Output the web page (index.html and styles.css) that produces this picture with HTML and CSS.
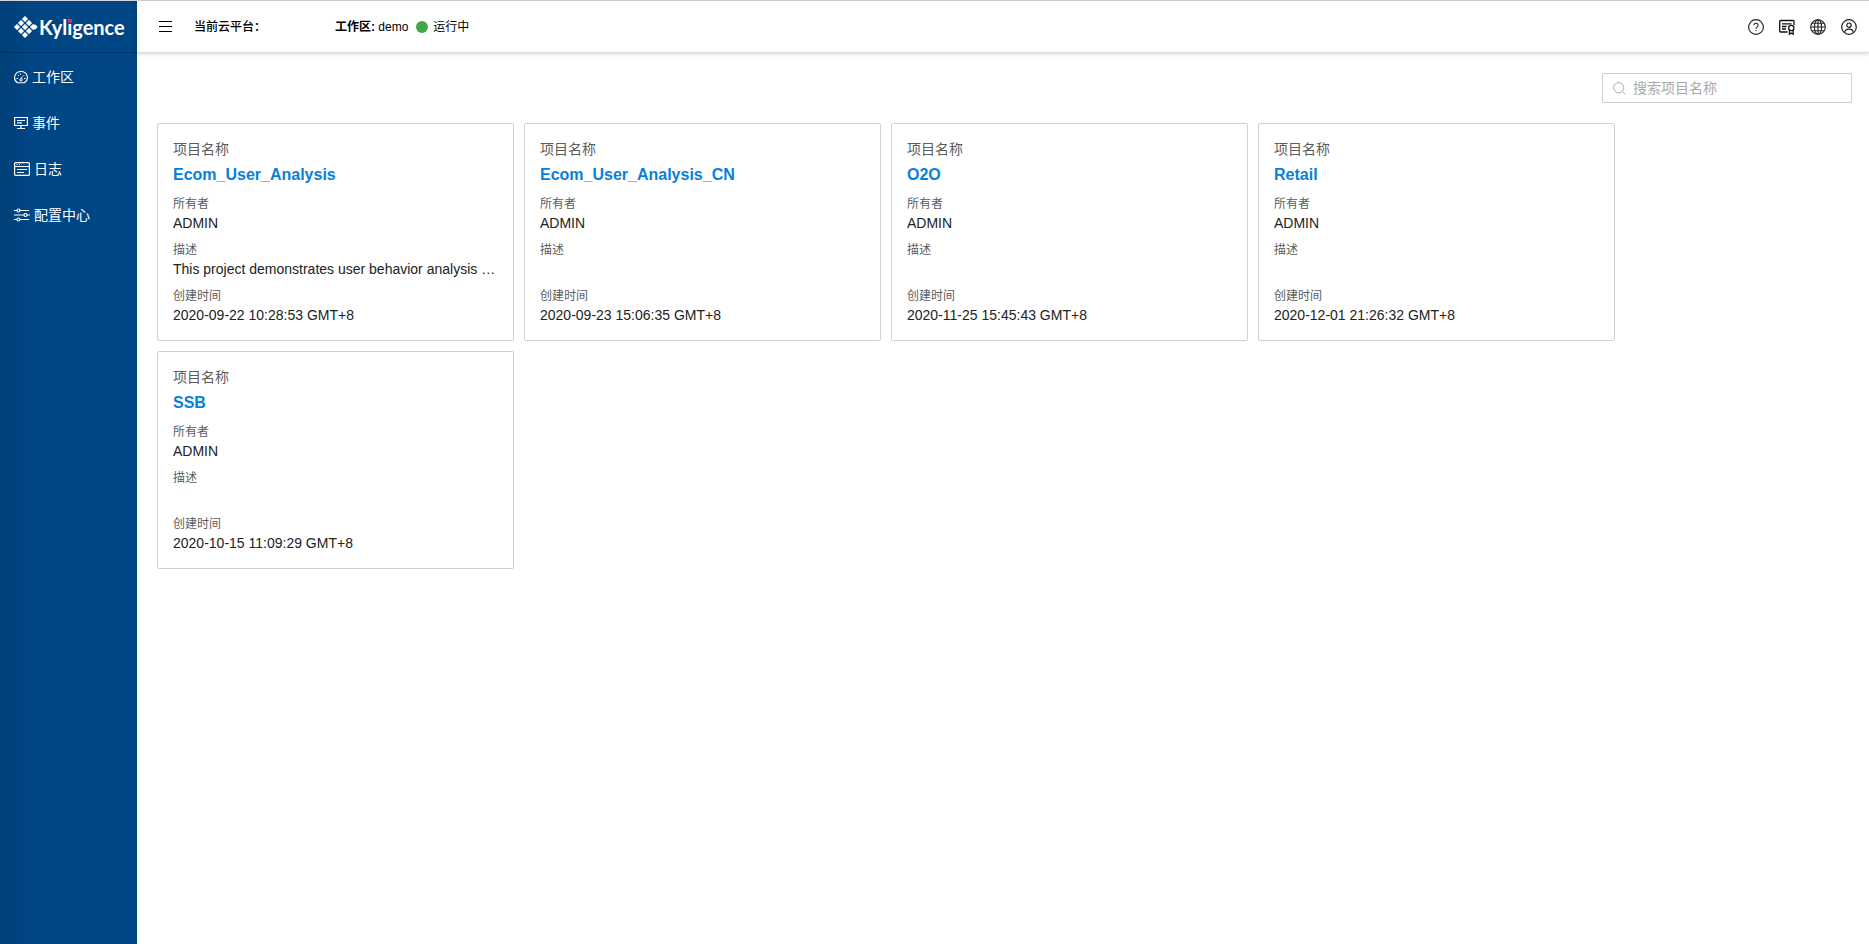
FILE: index.html
```html
<!DOCTYPE html>
<html lang="zh-CN">
<head>
<meta charset="utf-8">
<title>Kyligence</title>
<link rel="stylesheet" href="styles.css">
</head>
<body>
<div class="app">
  <aside class="sidebar">
    <a class="logo" href="#">
      <svg class="logo-mark" width="24" height="22" viewBox="0 0 24 22" fill="#fff" stroke="#fff" stroke-width="1.700" stroke-linejoin="round" aria-hidden="true">
        <path d="M11 1l2 2-2 2-2-2zM7 5l2 2-2 2-2-2zM15 5l2 2-2 2-2-2zM3 9l2 2-2 2-2-2zM11 9l2 2-2 2-2-2zM19 9Q21.500 9 22.500 11 21.500 13 19 13L17 11zM7 13l2 2-2 2-2-2zM15 13l2 2-2 2-2-2zM11 17l2 2-2 2-2-2z"/>
      </svg>
      <span class="logo-text">Kyl<span class="logo-i">i</span>gence</span>
    </a>
    <nav class="menu">
      <a class="menu-item" href="#">
        <svg width="14" height="14" viewBox="0 0 14 14" fill="none" stroke="#fff" aria-hidden="true"><path d="M3.500 12.800C-1.500 9.500.3 1.500 7 1.500s8.500 8 3.500 11.300Z" stroke-width="1.100" stroke-linejoin="round"/><circle cx="7" cy="9.800" r="1.200"/><path d="M7.500 8.600l.8-2M2.500 8.500h1.500M10 8.500h1.500M3.800 5l1 .9M10.300 5l-.8.800M6.500 3.500v1.300"/></svg>
        <span>工作区</span>
      </a>
      <a class="menu-item" href="#">
        <svg width="14" height="14" viewBox="0 0 14 14" fill="none" stroke="#fff" stroke-width="1.200" aria-hidden="true"><path d="M.6 1.500h12.800v8H.6zM3 4.500h8M3 6.800h5M7 9.500v3M3 12.500h8"/></svg>
        <span>事件</span>
      </a>
      <a class="menu-item" href="#">
        <svg width="16" height="14" viewBox="0 0 16 14" fill="none" stroke="#fff" stroke-width="1.200" aria-hidden="true"><rect x=".6" y=".6" width="14.800" height="12.800" rx="1"/><path d="M.5 4.500h15M3 7.500h10M3 10.500h7M2.500 2.500h1M5 2.500h1"/></svg>
        <span>日志</span>
      </a>
      <a class="menu-item" href="#">
        <svg width="16" height="14" viewBox="0 0 16 14" fill="none" stroke="#fff" stroke-width="1.200" aria-hidden="true"><path d="M0 2.500h3M6 2.500h9M0 7h10M13 7h3M0 11.500h3M6 11.500h9"/><circle cx="4.500" cy="2.500" r="1.500"/><circle cx="11.500" cy="7" r="1.500"/><circle cx="4.500" cy="11.500" r="1.500"/></svg>
        <span>配置中心</span>
      </a>
    </nav>
  </aside>
  <div class="page">
    <header class="topbar">
      <button class="icon-button toggle" type="button" aria-label="菜单"><svg width="13" height="11" viewBox="0 0 13 11" stroke="#000"><path d="M0 .5h13M0 5.500h13M0 10.500h13"/></svg></button>
      <span class="platform">当前云平台：</span>
      <span class="workspace"><b>工作区:</b> demo</span>
      <span class="dot"></span>
      <span>运行中</span>
      <div class="tools">
        <button class="icon-button" type="button" aria-label="帮助"><svg width="16" height="16" viewBox="0 0 16 16" fill="none" stroke="#222" stroke-width="1.100"><circle cx="8" cy="8" r="7.400"/><path d="M5.900 6.300a2.100 2.100 0 1 1 3.200 1.800Q8 8.800 8 9.900M8 11.200v1.100"/></svg></button>
        <button class="icon-button" type="button" aria-label="许可证"><svg width="16" height="16" viewBox="0 0 16 16" fill="none" stroke="#111" stroke-width="1.300"><path d="M8.500 13H1.500Q.7 13 .7 12.200V2.500Q.7 1.500 1.700 1.500H14q1 0 1 1v3.500M3 4.800h9.500M3 7.500h4.500M3 10h4"/><circle cx="12.300" cy="9" r="2.600"/><path d="M10.400 11v4.300l1.900-1.300 1.900 1.300V11"/></svg></button>
        <button class="icon-button" type="button" aria-label="语言"><svg width="16" height="16" viewBox="0 0 16 16" fill="none" stroke="#222" stroke-width="1.100"><circle cx="8" cy="8" r="7.300"/><ellipse cx="8" cy="8" rx="3.600" ry="7.300"/><path d="M8 .6v14.800M.6 8h14.800M1.700 4.300h12.600M1.700 11.700h12.600"/></svg></button>
        <button class="icon-button" type="button" aria-label="用户"><svg width="16" height="16" viewBox="0 0 16 16" fill="none" stroke="#222" stroke-width="1.200"><circle cx="8" cy="8" r="7.300"/><circle cx="8" cy="6.200" r="2.200"/><path d="M3.700 13.600Q4 10.200 8 10.200t4.300 3.400"/></svg></button>
      </div>
    </header>
    <main class="content">
      <label class="search">
        <svg width="13" height="13" viewBox="0 0 13 13" fill="none" stroke="#aaa" aria-hidden="true"><circle cx="5.700" cy="5.700" r="5.100"/><path d="M9.400 9.400l3.200 3.200"/></svg>
        <input type="text" placeholder="搜索项目名称" aria-label="搜索项目名称">
      </label>
      <div class="cards">
        <article class="card">
          <div class="name-label">项目名称</div>
          <a class="name" href="#">Ecom_User_Analysis</a>
          <dl class="fields">
            <div class="field"><dt>所有者</dt><dd>ADMIN</dd></div>
            <div class="field"><dt>描述</dt><dd>This project demonstrates user behavior analysis …</dd></div>
            <div class="field"><dt>创建时间</dt><dd>2020-09-22 10:28:53 GMT+8</dd></div>
          </dl>
        </article>
        <article class="card">
          <div class="name-label">项目名称</div>
          <a class="name" href="#">Ecom_User_Analysis_CN</a>
          <dl class="fields">
            <div class="field"><dt>所有者</dt><dd>ADMIN</dd></div>
            <div class="field"><dt>描述</dt><dd></dd></div>
            <div class="field"><dt>创建时间</dt><dd>2020-09-23 15:06:35 GMT+8</dd></div>
          </dl>
        </article>
        <article class="card">
          <div class="name-label">项目名称</div>
          <a class="name" href="#">O2O</a>
          <dl class="fields">
            <div class="field"><dt>所有者</dt><dd>ADMIN</dd></div>
            <div class="field"><dt>描述</dt><dd></dd></div>
            <div class="field"><dt>创建时间</dt><dd>2020-11-25 15:45:43 GMT+8</dd></div>
          </dl>
        </article>
        <article class="card">
          <div class="name-label">项目名称</div>
          <a class="name" href="#">Retail</a>
          <dl class="fields">
            <div class="field"><dt>所有者</dt><dd>ADMIN</dd></div>
            <div class="field"><dt>描述</dt><dd></dd></div>
            <div class="field"><dt>创建时间</dt><dd>2020-12-01 21:26:32 GMT+8</dd></div>
          </dl>
        </article>
        <article class="card">
          <div class="name-label">项目名称</div>
          <a class="name" href="#">SSB</a>
          <dl class="fields">
            <div class="field"><dt>所有者</dt><dd>ADMIN</dd></div>
            <div class="field"><dt>描述</dt><dd></dd></div>
            <div class="field"><dt>创建时间</dt><dd>2020-10-15 11:09:29 GMT+8</dd></div>
          </dl>
        </article>
      </div>
    </main>
  </div>
</div>
</body>
</html>
```
FILE: styles.css
```css
* { box-sizing: border-box; }
body {
  margin: 0;
  background: #fff;
  color: #222;
  font-family: "Liberation Sans", "Noto Sans CJK SC", sans-serif;
  font-size: 14px;
  line-height: 20px;
}
a { color: inherit; text-decoration: none; }
svg { display: block; flex: none; }

.app {
  display: flex;
  min-height: 100vh;
  border-top: 1px solid #d3d3d8;
}
.sidebar {
  flex: none;
  width: 137px;
  background: linear-gradient(90deg, #004079, #004584 30px);
  color: #fff;
}
.logo {
  display: flex;
  align-items: center;
  gap: 1px;
  height: 52px;
  padding-left: 14px;
  border-bottom: 1px solid #003565;
}
.logo-text {
  font-family: Lato, sans-serif;
  font-size: 20px;
  font-weight: 700;
  line-height: 24px;
}
.logo-i { position: relative; }
.logo-i::after {
  content: "";
  position: absolute;
  top: 4px;
  left: 1px;
  width: 4px;
  height: 4px;
  border-radius: 50%;
  background: #e5245e;
}
.menu { padding-top: 1px; }
.menu-item {
  display: flex;
  align-items: center;
  gap: 4px;
  height: 46px;
  padding-left: 14px;
}

.page { flex: 1; min-width: 0; }
.topbar {
  display: flex;
  align-items: center;
  height: 52px;
  padding: 0 12px 0 22px;
  border-bottom: 1px solid #dcdcdc;
  box-shadow: 0 1px 4px rgba(0, 0, 0, 0.16);
  color: #000;
  font-size: 12px;
}
.icon-button {
  padding: 0;
  border: 0;
  background: none;
  cursor: pointer;
}
.toggle { margin-right: 22px; }
.platform { width: 141px; font-weight: 500; }
.workspace { margin-right: 8px; }
.dot {
  width: 12px;
  height: 12px;
  margin-right: 5px;
  border-radius: 50%;
  background: #43a843;
}
.tools {
  display: flex;
  align-items: center;
  gap: 15px;
  margin-left: auto;
}

.content { padding: 20px 17px 20px 20px; }
.search {
  display: flex;
  align-items: center;
  gap: 7px;
  width: 250px;
  height: 30px;
  margin: 0 0 20px auto;
  padding: 0 10px;
  border: 1px solid #d0d0d0;
  border-radius: 2px;
}
.search input {
  flex: 1;
  min-width: 0;
  padding: 0;
  border: 0;
  outline: 0;
  background: none;
  font: inherit;
}
.search input::placeholder { color: #aaa; opacity: 1; }

.cards {
  display: grid;
  grid-template-columns: repeat(auto-fill, 357px);
  gap: 10px;
}
.card {
  padding: 15px;
  border: 1px solid #d0d0d0;
  border-radius: 2px;
}
.name-label { color: #5c5c5c; }
.name {
  display: block;
  margin: 4px 0 8px;
  color: #0780dc;
  font-size: 16px;
  font-weight: 700;
  line-height: 24px;
}
.fields {
  display: flex;
  flex-direction: column;
  gap: 8px;
  margin: 0;
}
.field dt {
  color: #5c5c5c;
  font-size: 12px;
  line-height: 18px;
}
.field dd {
  min-height: 20px;
  margin: 0;
  white-space: nowrap;
}
```
